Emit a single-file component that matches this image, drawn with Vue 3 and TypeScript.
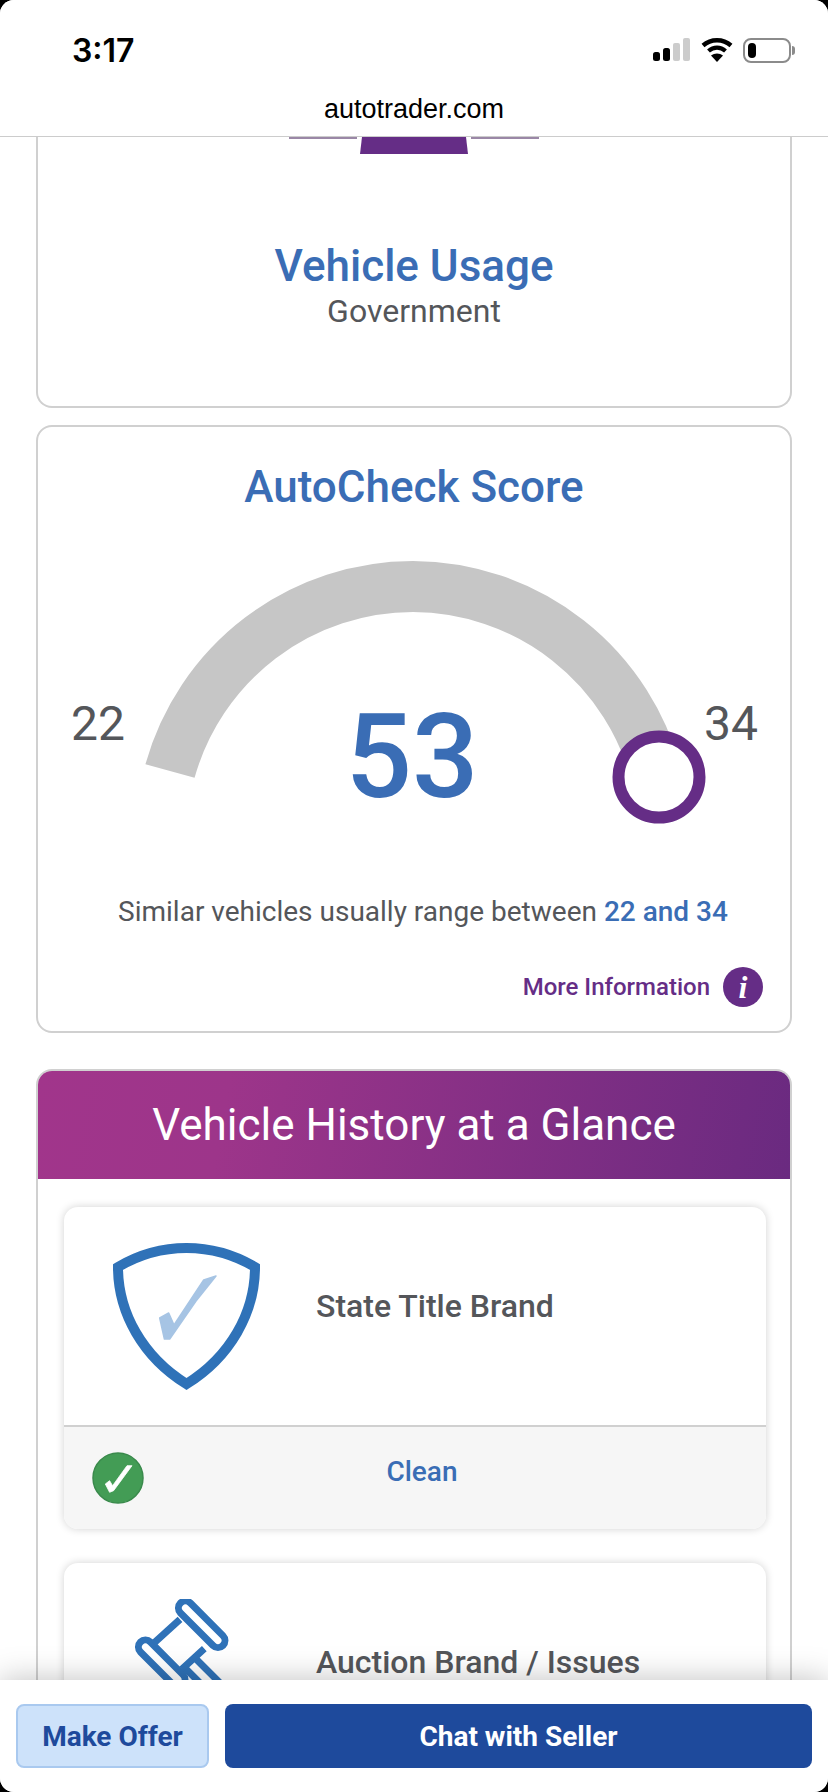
<template>
  <div class="screen">
    <header class="browser-bar">
      <div class="status">
        <span class="time">3:17</span>
        <div class="status-icons">
          <svg width="38" height="24" viewBox="0 0 38 24">
            <rect x="0" y="14" width="7" height="9" rx="2.5" fill="#000" />
            <rect x="10" y="10" width="7" height="13" rx="2.5" fill="#000" />
            <rect x="20" y="5" width="7" height="18" rx="2" fill="#ccc" />
            <rect x="30" y="0" width="7" height="23" rx="2" fill="#ccc" />
          </svg>
          <svg width="32" height="24" viewBox="0 0 32 24">
            <path d="M2 7.5 C10 0.5 22 0.5 30 7.5" fill="none" stroke="#000" stroke-width="4.4" />
            <path d="M7.5 13 C12.5 8.5 19.5 8.5 24.5 13" fill="none" stroke="#000" stroke-width="4.2" />
            <path d="M16 24 L10 17.5 C13.5 14.8 18.5 14.8 22 17.5 Z" fill="#000" />
          </svg>
          <div class="battery">
            <span class="battery-level"></span>
          </div>
        </div>
      </div>
      <div class="address">autotrader.com</div>
    </header>

    <main class="content">
      <section class="card usage-card">
        <div class="stub">
          <span class="stub-line"></span>
          <span class="stub-block"></span>
          <span class="stub-line"></span>
        </div>
        <h2 class="card-title">Vehicle Usage</h2>
        <p class="usage-value">Government</p>
      </section>

      <section class="card score-card">
        <h2 class="card-title">AutoCheck Score</h2>
        <svg class="gauge" width="750" height="368" viewBox="0 0 750 368">
          <path d="M131 259 A252.5 252.5 0 0 1 374 74.5 A252.5 252.5 0 0 1 618 266" fill="none" stroke="#c6c6c6" stroke-width="51" />
          <circle cx="620" cy="265" r="40.5" fill="#fff" stroke="#652d86" stroke-width="12" />
          <text x="32" y="228" class="gauge-range">{{ range.low }}</text>
          <text x="665" y="228" class="gauge-range">{{ range.high }}</text>
          <text x="373" y="285" text-anchor="middle" class="gauge-score">{{ score }}</text>
        </svg>
        <p class="range-text">
          Similar vehicles usually range between
          <strong>{{ range.low }} and {{ range.high }}</strong>
        </p>
        <div class="more-info">
          <span>More Information</span>
          <i class="info-icon">i</i>
        </div>
      </section>

      <section class="card glance-card">
        <h2 class="glance-head">Vehicle History at a Glance</h2>
        <div class="glance-body">
          <article class="item">
            <div class="item-main">
              <svg class="item-icon" width="147" height="147" viewBox="0 0 147 147">
                <path d="M5 24 C27 11 50 5 73.5 5 C97 5 120 11 142 24 C142 70 117 114 73.5 141 C30 114 5 70 5 24 Z" fill="#fff" stroke="#2f72b8" stroke-width="10" />
                <path d="M46.7 75 L55.7 70 L61 82 L90.7 37 L103 33 L83 58 L56.7 96 L51.4 96 Z" fill="#a6c4e4" stroke="#a6c4e4" stroke-width="1.5" stroke-linejoin="round" />
              </svg>
              <h3 class="item-title">State Title Brand</h3>
            </div>
            <div class="item-foot">
              <svg width="52" height="52" viewBox="0 0 52 52">
                <circle cx="26" cy="26" r="25" fill="#439c55" stroke="#3a8a4c" stroke-width="1.5" />
                <path d="M13.3 32 L17.6 28.7 L20.6 33.7 L35 13.7 L40 13.7 L21.6 38.7 L17.6 40.3 Z" fill="#fff" stroke="#fff" stroke-width="0.8" stroke-linejoin="round" />
              </svg>
              <span class="item-status">Clean</span>
            </div>
          </article>

          <article class="item">
            <div class="item-main">
              <svg class="item-icon" width="147" height="147" viewBox="0 0 147 147">
                <g fill="none" stroke="#2f72b8" stroke-width="7" stroke-linejoin="round">
                  <rect x="-7" y="-30" width="14" height="60" rx="7" transform="translate(88.7 25.3) rotate(-45)" />
                  <rect x="-7" y="-30" width="14" height="60" rx="7" transform="translate(48.7 64.3) rotate(-45)" />
                  <path d="M67 20.3 L40.3 44.7 M91.3 49.7 L68.7 70.3" />
                  <path d="M83 60 L143 120 M73 70 L133 130" />
                </g>
              </svg>
              <h3 class="item-title">Auction Brand / Issues</h3>
            </div>
          </article>
        </div>
      </section>
    </main>

    <footer class="actions">
      <button class="btn btn-light">Make Offer</button>
      <button class="btn btn-primary">Chat with Seller</button>
    </footer>
  </div>
</template>

<script setup lang="ts">
const score = 53
const range = { low: 22, high: 34 }
</script>

<style>
html,
body {
  margin: 0;
  background: #000;
}
</style>

<style scoped>
* {
  box-sizing: border-box;
}

.screen {
  width: 828px;
  height: 1792px;
  background: #fff;
  border-radius: 14px;
  overflow: hidden;
  display: flex;
  flex-direction: column;
  font-family: Roboto, sans-serif;
  color: #54565a;
}

.browser-bar {
  height: 137px;
  flex: none;
  border-bottom: 1px solid #ccc;
  background: #fff;
}

.status {
  display: flex;
  justify-content: space-between;
  align-items: center;
  height: 60px;
  margin-top: 20px;
  padding: 0 37px 0 72px;
}

.time {
  font-family: Inter, sans-serif;
  font-size: 32px;
  font-weight: 600;
  color: #000;
}

.status-icons {
  display: flex;
  align-items: center;
  gap: 10px;
}

.battery {
  position: relative;
  width: 48px;
  height: 25px;
  border: 2px solid #8b8b8b;
  border-radius: 8px;
  padding: 3px;
}

.battery::after {
  content: "";
  position: absolute;
  right: -6px;
  top: 6px;
  width: 3px;
  height: 9px;
  background: #8b8b8b;
  border-radius: 0 3px 3px 0;
}

.battery-level {
  display: block;
  width: 8px;
  height: 15px;
  background: #000;
  border-radius: 4px;
}

.address {
  text-align: center;
  font-family: "Liberation Sans", sans-serif;
  font-size: 27px;
  line-height: 30px;
  margin-top: 14px;
  color: #000;
}

.content {
  flex: 1;
  min-height: 0;
  overflow: hidden;
  padding: 0 36px;
}

.card {
  border: 2px solid #d0d0d0;
  border-radius: 16px;
  background: #fff;
}

.usage-card {
  height: 271px;
  border-top: 0;
  border-top-left-radius: 0;
  border-top-right-radius: 0;
  text-align: center;
  margin-bottom: 17px;
}

.stub {
  display: flex;
  justify-content: center;
  align-items: flex-start;
  height: 17px;
  margin-bottom: 87px;
}

.stub-line {
  width: 68px;
  height: 2px;
  background: #9a87a6;
}

.stub-block {
  width: 108px;
  height: 17px;
  margin: 0 3px;
  background: #652d86;
  clip-path: polygon(2px 0, calc(100% - 2px) 0, 100% 100%, 0 100%);
}

.card-title {
  margin: 0;
  font-size: 44px;
  line-height: 50px;
  font-weight: 500;
  color: #3a6db5;
  text-align: center;
}

.usage-value {
  margin: 0;
  font-size: 32px;
  line-height: 40px;
}

.score-card {
  height: 608px;
  padding-top: 35px;
  margin-bottom: 36px;
}

.gauge {
  display: block;
  margin-left: 1px;
}

.gauge-range {
  font-size: 48px;
  fill: #54565a;
}

.gauge-score {
  font-size: 117px;
  font-weight: 500;
  fill: #3a6db5;
}

.range-text {
  margin: 12px 0 0;
  padding-left: 18px;
  font-size: 28px;
  line-height: 40px;
  text-align: center;
}

.range-text strong {
  font-weight: 500;
  color: #3a6db5;
}

.more-info {
  display: flex;
  justify-content: flex-end;
  align-items: center;
  gap: 13px;
  margin-top: 35px;
  padding-right: 27px;
  font-size: 24px;
  font-weight: 500;
  color: #652d86;
}

.info-icon {
  display: flex;
  align-items: center;
  justify-content: center;
  width: 40px;
  height: 40px;
  border-radius: 50%;
  background: #652d86;
  color: #fff;
  font-family: "Liberation Serif", serif;
  font-size: 32px;
  font-weight: 700;
  font-style: italic;
}

.glance-card {
  height: 900px;
}

.glance-head {
  margin: 0;
  height: 108px;
  border-radius: 14px 14px 0 0;
  background: linear-gradient(100deg, #a1358b 0%, #9d358a 25%, #6a2a80 100%);
  color: #fff;
  font-size: 44px;
  font-weight: 400;
  line-height: 108px;
  text-align: center;
}

.glance-body {
  padding: 28px 24px 28px 26px;
  display: flex;
  flex-direction: column;
  gap: 34px;
}

.item {
  border-radius: 14px;
  background: #fff;
  box-shadow: 0 0 8px rgba(0, 0, 0, 0.18);
  overflow: hidden;
}

.item-main {
  display: flex;
  align-items: center;
  gap: 56px;
  height: 218px;
  padding-left: 49px;
}

.item-icon {
  flex: none;
}

.item-title {
  margin: 0 0 20px;
  font-size: 32px;
  font-weight: 500;
}

.item-foot {
  display: flex;
  align-items: center;
  height: 104px;
  border-top: 2px solid #d0d0d0;
  background: #f6f6f6;
  padding: 0 66px 0 28px;
}

.item-status {
  flex: 1;
  margin-bottom: 14px;
  font-size: 28px;
  font-weight: 500;
  text-align: center;
  color: #3a6db5;
}

.actions {
  flex: none;
  display: flex;
  gap: 16px;
  height: 112px;
  padding: 24px 16px;
  background: #fff;
  box-shadow: 0 0 30px rgba(0, 0, 0, 0.25);
  position: relative;
}

.btn {
  height: 64px;
  border-radius: 8px;
  font-family: Roboto, sans-serif;
  font-size: 28px;
  font-weight: 700;
}

.btn-light {
  width: 193px;
  flex: none;
  background: #cde2fa;
  border: 2px solid #a9c9ef;
  color: #1e4a9c;
}

.btn-primary {
  flex: 1;
  background: #1e4a9c;
  border: 0;
  color: #fff;
}
</style>
